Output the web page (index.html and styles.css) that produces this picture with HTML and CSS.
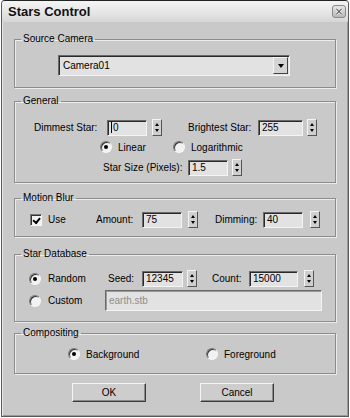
FILE: index.html
```html
<!DOCTYPE html>
<html lang="en">
<head>
  <meta charset="UTF-8" />
  <title>Stars Control</title>
  <link rel="stylesheet" href="styles.css">
</head>
<body>
  <div class="window">
    <div class="titlebar">
      <span class="title">Stars Control</span>
      <span class="close">
        <svg width="14" height="13" viewBox="0 0 14 13">
          <path d="M4 3.5 L10 9.5 M10 3.5 L4 9.5" stroke="#fff" stroke-width="2.6"/>
          <path d="M4 3.5 L10 9.5 M10 3.5 L4 9.5" stroke="#555" stroke-width="1.2"/>
        </svg>
      </span>
    </div>

    <div class="content">
      <fieldset class="group g-camera">
        <legend>Source Camera</legend>
        <div class="combo">
          <span class="combo-text">Camera01</span>
          <span class="combo-btn"><i class="tri-down"></i></span>
        </div>
      </fieldset>

      <fieldset class="group g-general">
        <legend>General</legend>
        <div class="row r-dim">
          <span class="lbl w-dim">Dimmest Star:</span>
          <span class="field w40"><i class="caret"></i>0</span>
          <span class="spin s5"><i class="tri-up"></i><i class="tri-down sm"></i></span>
          <span class="lbl w-bright">Brightest Star:</span>
          <span class="field w45">255</span>
          <span class="spin s4"><i class="tri-up"></i><i class="tri-down sm"></i></span>
        </div>
        <div class="row r-mode">
          <span class="opt o-linear"><i class="radio on"></i>Linear</span>
          <span class="opt"><i class="radio"></i>Logarithmic</span>
        </div>
        <div class="row r-size">
          <span class="lbl w-size">Star Size (Pixels):</span>
          <span class="field w40">1.5</span>
          <span class="spin s4"><i class="tri-up"></i><i class="tri-down sm"></i></span>
        </div>
      </fieldset>

      <fieldset class="group g-blur">
        <legend>Motion Blur</legend>
        <div class="row r-blur">
          <span class="opt o-use"><i class="check"></i>Use</span>
          <span class="lbl w-amount">Amount:</span>
          <span class="field w40">75</span>
          <span class="spin s6"><i class="tri-up"></i><i class="tri-down sm"></i></span>
          <span class="lbl w-dimming">Dimming:</span>
          <span class="field w40">40</span>
          <span class="spin s7"><i class="tri-up"></i><i class="tri-down sm"></i></span>
        </div>
      </fieldset>

      <fieldset class="group g-db">
        <legend>Star Database</legend>
        <div class="row r-random">
          <span class="opt o-random"><i class="radio on"></i>Random</span>
          <span class="lbl w-seed">Seed:</span>
          <span class="field w41">12345</span>
          <span class="spin s4"><i class="tri-up"></i><i class="tri-down sm"></i></span>
          <span class="lbl w-count">Count:</span>
          <span class="field w49">15000</span>
          <span class="spin s6"><i class="tri-up"></i><i class="tri-down sm"></i></span>
        </div>
        <div class="row r-custom">
          <span class="opt o-custom"><i class="radio"></i>Custom</span>
          <span class="field wide disabled">earth.stb</span>
        </div>
      </fieldset>

      <fieldset class="group g-comp">
        <legend>Compositing</legend>
        <div class="row r-comp">
          <span class="opt o-bg"><i class="radio on"></i>Background</span>
          <span class="opt"><i class="radio"></i>Foreground</span>
        </div>
      </fieldset>

      <div class="buttons">
        <button class="btn b-ok">OK</button>
        <button class="btn b-cancel">Cancel</button>
      </div>
    </div>
  </div>
</body>
</html>
```

FILE: styles.css
```css
body {
  margin: 0;
  background: #fff;
  font-family: 'Liberation Sans', Arial, sans-serif;
  font-size: 10px;
  color: #000;
}
.window {
  width: 348px;
  height: 417px;
  margin-left: 1px;
  box-sizing: border-box;
  background: #c9c9c9;
  border: 1px solid #5a5a5a;
  border-top-color: #222;
  border-radius: 4px 4px 0 0;
  box-shadow: inset 1px 0 0 #e8e8e8, inset -1px -1px 0 #9a9a9a;
}
.titlebar {
  height: 21px;
  display: flex;
  align-items: center;
  justify-content: space-between;
  padding: 0 2px 0 6px;
  background: linear-gradient(#f4f4f4, #e4e4e4 60%, #d6d6d6);
  border-radius: 3px 3px 0 0;
}
.title {
  font-weight: bold;
  font-size: 13px;
  color: #111;
}
.close {
  width: 14px;
  height: 13px;
  border: 1px solid #8a8a8a;
  border-radius: 3px;
  background: linear-gradient(#e6e6e6, #b8b8b8);
  box-sizing: border-box;
  display: flex;
  align-items: center;
  justify-content: center;
}
.close svg {
  display: block;
}
.content {
  padding: 11px 0 0 12px;
}

/* group boxes */
.group {
  width: 322px;
  box-sizing: border-box;
  margin: 0;
  padding: 0;
  min-width: 0;
  border: 1px solid #8c8c8c;
  box-shadow: 1px 1px 0 #ececec, inset 1px 1px 0 #ececec;
}
.group legend {
  margin-left: 6px;
  padding: 0 2px;
  line-height: 12px;
  font-size: 10px;
}
.g-camera { padding-bottom: 11px; }
.g-general { margin-top: 7px; padding-bottom: 6px; }
.g-blur { margin-top: 9px; padding-bottom: 8px; }
.g-db { margin-top: 11px; padding-bottom: 10px; }
.g-comp { margin-top: 5px; padding-bottom: 12px; }

.row {
  display: flex;
  align-items: center;
  height: 17px;
}
.r-dim { margin-top: 12px; }
.r-mode { margin-top: 4px; height: 14px; }
.r-size { margin-top: 5px; }
.r-blur { margin-top: 7px; }
.r-random { margin-top: 10px; }
.r-custom { margin-top: 3px; height: 21px; }
.r-comp { margin-top: 8px; height: 14px; }

.lbl {
  flex: none;
  white-space: nowrap;
}
.w-dim { width: 73px; margin-left: 19px; }
.w-bright { width: 70px; margin-left: 26px; }
.w-size { width: 85px; margin-left: 88px; }
.w-amount { width: 46px; }
.w-dimming { width: 48px; margin-left: 17px; }
.w-seed { width: 34px; }
.w-count { width: 37px; margin-left: 15px; }

/* sunken text fields */
.field {
  flex: none;
  height: 16px;
  box-sizing: border-box;
  display: flex;
  align-items: center;
  padding-left: 3px;
  background: #e2e2e2;
  border: 1px solid;
  border-color: #6a6a6a #f4f4f4 #f4f4f4 #6a6a6a;
  box-shadow: inset 1px 1px 0 #2a2a2a;
  white-space: nowrap;
}
.w40 { width: 40px; }
.w41 { width: 41px; }
.w45 { width: 45px; }
.w49 { width: 49px; }
.field.wide {
  width: 217px;
  height: 21px;
}
.field.disabled {
  color: #8e8e8e;
  box-shadow: inset 1px 1px 0 #9a9a9a;
}
.caret {
  width: 1px;
  height: 11px;
  background: #000;
  margin-right: 1px;
}

/* spinners */
.spin {
  flex: none;
  width: 10px;
  height: 17px;
  box-sizing: border-box;
  display: flex;
  flex-direction: column;
  justify-content: space-evenly;
  align-items: center;
  background: #cfcfcf;
  border: 1px solid;
  border-color: #f4f4f4 #555 #555 #f4f4f4;
}
.s4 { margin-left: 4px; }
.s5 { margin-left: 5px; }
.s6 { margin-left: 6px; }
.s7 { margin-left: 7px; }
.tri-up {
  width: 0;
  height: 0;
  border-left: 2.5px solid transparent;
  border-right: 2.5px solid transparent;
  border-bottom: 3px solid #000;
}
.tri-down {
  width: 0;
  height: 0;
  border-left: 3.5px solid transparent;
  border-right: 3.5px solid transparent;
  border-top: 4px solid #000;
}
.tri-down.sm {
  border-left-width: 2.5px;
  border-right-width: 2.5px;
  border-top-width: 3px;
}

/* combo box */
.combo {
  width: 232px;
  height: 21px;
  margin: 10px 0 0 43px;
  box-sizing: border-box;
  display: flex;
  align-items: center;
  justify-content: space-between;
  padding: 0 1px 0 4px;
  background: #e2e2e2;
  border: 1px solid;
  border-color: #6a6a6a #f4f4f4 #f4f4f4 #6a6a6a;
  box-shadow: inset 1px 1px 0 #2a2a2a;
}
.combo-btn {
  width: 15px;
  height: 17px;
  box-sizing: border-box;
  display: flex;
  align-items: center;
  justify-content: center;
  background: #d4d4d4;
  border: 1px solid;
  border-color: #f4f4f4 #444 #444 #f4f4f4;
}

/* radios and checkbox */
.opt {
  flex: none;
  display: flex;
  align-items: center;
  gap: 6px;
  white-space: nowrap;
}
.o-linear { margin-left: 85px; width: 73px; }
.o-use { margin-left: 15px; width: 66px; }
.o-random { margin-left: 14px; width: 79px; gap: 7px; }
.o-custom { margin-left: 14px; width: 76px; gap: 7px; }
.o-bg { margin-left: 53px; width: 138px; }
.radio {
  width: 12px;
  height: 12px;
  box-sizing: border-box;
  border-radius: 50%;
  background: #f2f2f2;
  border: 1px solid;
  border-color: #777 #f6f6f6 #f6f6f6 #777;
  box-shadow: inset 1px 1px 0 #333;
  position: relative;
}
.radio.on::after {
  content: "";
  position: absolute;
  left: 3px;
  top: 3px;
  width: 4px;
  height: 4px;
  border-radius: 50%;
  background: #000;
}
.check {
  width: 12px;
  height: 12px;
  box-sizing: border-box;
  background: #f2f2f2;
  border: 1px solid;
  border-color: #777 #f6f6f6 #f6f6f6 #777;
  box-shadow: inset 1px 1px 0 #333;
  position: relative;
}
.check::after {
  content: "";
  position: absolute;
  left: 2px;
  top: 1px;
  width: 5px;
  height: 3px;
  border-left: 2px solid #000;
  border-bottom: 2px solid #000;
  transform: rotate(-50deg) translate(-1px, 1px);
}

/* buttons */
.buttons {
  display: flex;
  margin-top: 9px;
}
.btn {
  width: 74px;
  height: 19px;
  padding: 0;
  font-family: 'Liberation Sans', Arial, sans-serif;
  font-size: 10px;
  color: #000;
  background: #cdcdcd;
  border: 1px solid;
  border-color: #f4f4f4 #3c3c3c #3c3c3c #f4f4f4;
  box-shadow: inset -1px -1px 0 #8a8a8a;
}
.b-ok { margin-left: 58px; }
.b-cancel { margin-left: 54px; }
```
